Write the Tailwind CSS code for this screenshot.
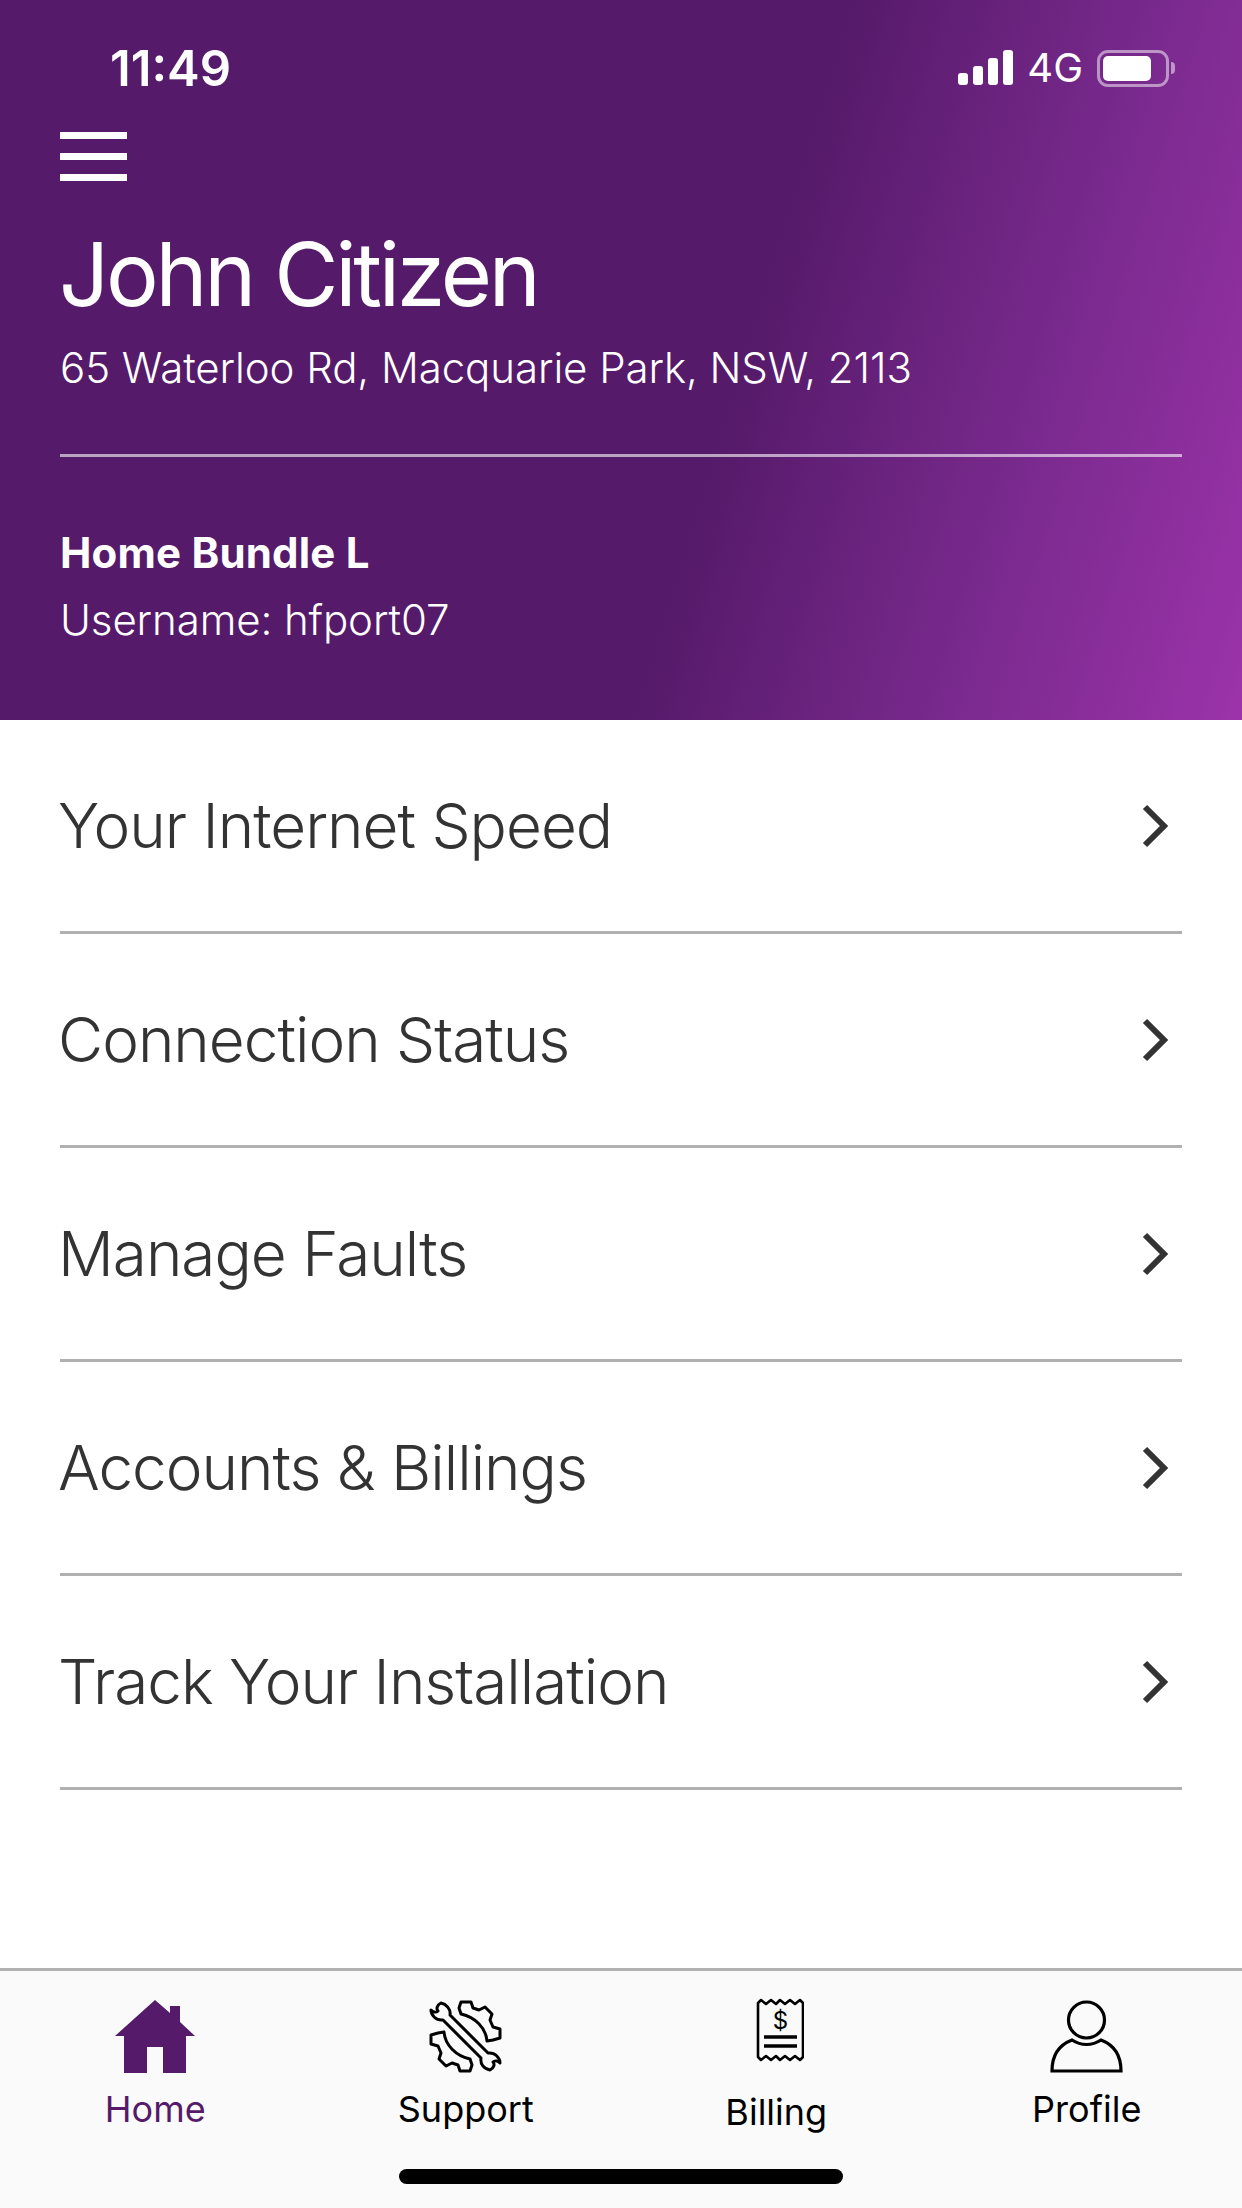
<html>
  <head>
    <title>Home</title>
    <script src="https://cdn.jsdelivr.net/npm/@tailwindcss/browser@4"></script>
  </head>

  <body>
    <div class="flex flex-col h-[2208px] w-[1242px] overflow-hidden bg-white" style='font-family: Inter, "Liberation Sans", sans-serif;'>

      <!-- Purple header -->
      <header class="h-[720px] px-[60px] text-white bg-[linear-gradient(107deg,#551a69_0%,#551a69_58%,#7a2a8e_80%,#9c33aa_100%)]">
        <!-- Status bar -->
        <div class="flex items-center justify-between h-[134px] pl-[50px] pr-[7px] pt-[2px]">
          <span class="text-[49px] font-semibold leading-none">11:49</span>
          <div class="flex items-center">
            <svg width="55" height="36" viewBox="0 0 55 36" fill="#fff">
              <rect x="0" y="23" width="10" height="12" rx="3" />
              <rect x="15" y="16" width="10" height="19" rx="3" />
              <rect x="30" y="8" width="10" height="27" rx="3" />
              <rect x="45" y="0" width="10" height="35" rx="3" />
            </svg>
            <span class="ml-[14px] text-[40px] leading-none">4G</span>
            <div class="ml-[14px] flex items-center">
              <div class="w-[72px] h-[37px] rounded-[11px] border-[3px] border-white/50 p-[3px] pr-[15px]">
                <div class="h-full rounded-[5px] bg-white"></div>
              </div>
              <div class="ml-[2px] w-[4px] h-[12px] rounded-r-full bg-white/50"></div>
            </div>
          </div>
        </div>

        <!-- Menu button -->
        <div class="flex flex-col gap-[14px] w-[67px] mt-[-2px]">
          <div class="h-[7px] bg-white"></div>
          <div class="h-[7px] bg-white"></div>
          <div class="h-[7px] bg-white"></div>
        </div>

        <h1 class="mt-[38px] -ml-[1px] text-[88px] leading-[110px] tracking-[-3.3px]">John Citizen</h1>
        <p class="mt-[14px] text-[42px] leading-[50px] font-light tracking-[-0.07px]">65 Waterloo Rd, Macquarie Park, NSW, 2113</p>

        <div class="mt-[61px] h-[3px] bg-white/60"></div>

        <p class="mt-[71px] text-[42px] leading-[50px] font-bold tracking-[0.2px]">Home Bundle L</p>
        <p class="mt-[17px] text-[42px] leading-[50px] font-light tracking-[-0.1px]">Username: hfport07</p>
      </header>

      <!-- Menu list -->
      <ul class="px-[60px] text-[#333333] text-[62px] font-light tracking-[-1px]">
        <li class="flex items-center justify-between h-[214px] border-b-[3px] border-[#b0b0b0]">
          <span class="-ml-[2px]">Your Internet Speed</span>
          <svg class="mr-[13px]" width="28" height="44" viewBox="0 0 28 44" fill="none" stroke="#333333" stroke-width="6"><path d="M4 3 L23 22 L4 41" /></svg>
        </li>
        <li class="flex items-center justify-between h-[214px] border-b-[3px] border-[#b0b0b0]">
          <span class="-ml-[2px]">Connection Status</span>
          <svg class="mr-[13px]" width="28" height="44" viewBox="0 0 28 44" fill="none" stroke="#333333" stroke-width="6"><path d="M4 3 L23 22 L4 41" /></svg>
        </li>
        <li class="flex items-center justify-between h-[214px] border-b-[3px] border-[#b0b0b0]">
          <span class="-ml-[2px]">Manage Faults</span>
          <svg class="mr-[13px]" width="28" height="44" viewBox="0 0 28 44" fill="none" stroke="#333333" stroke-width="6"><path d="M4 3 L23 22 L4 41" /></svg>
        </li>
        <li class="flex items-center justify-between h-[214px] border-b-[3px] border-[#b0b0b0]">
          <span class="-ml-[2px]">Accounts &amp; Billings</span>
          <svg class="mr-[13px]" width="28" height="44" viewBox="0 0 28 44" fill="none" stroke="#333333" stroke-width="6"><path d="M4 3 L23 22 L4 41" /></svg>
        </li>
        <li class="flex items-center justify-between h-[214px] border-b-[3px] border-[#b0b0b0]">
          <span class="-ml-[2px]">Track Your Installation</span>
          <svg class="mr-[13px]" width="28" height="44" viewBox="0 0 28 44" fill="none" stroke="#333333" stroke-width="6"><path d="M4 3 L23 22 L4 41" /></svg>
        </li>
      </ul>

      <!-- Tab bar -->
      <nav class="relative mt-auto h-[240px] border-t-[3px] border-[#b0b0b0] bg-[#fafafa] grid grid-cols-4 text-[36px] leading-[44px] text-black">
        <div class="flex flex-col items-center pt-[29px] text-[#551a69]">
          <svg width="80" height="73" viewBox="0 0 80 73" fill="#551a69"><path d="M40 0 L55 13 L55 6 L65 6 L65 22 L80 36 L71 36 L71 73 L48 73 L48 47 L32 47 L32 73 L9 73 L9 36 L0 36 Z" /></svg>
          <span class="mt-[14px]">Home</span>
        </div>
        <div class="flex flex-col items-center pt-[29px]">
          <svg width="73" height="73" viewBox="0 0 73 73" fill="none" stroke="#000" stroke-width="3" stroke-linejoin="round">
            <path d="M30 8 L32 2 L42 2 L44 8 L50 10 L56 7 L63 14 L61 20 L64 27 L71 29 L71 38 L64 40 L58 41 C57 28 46 17 32 14 Z" />
            <path d="M43 65 L41 71 L31 71 L29 65 L23 63 L17 66 L10 59 L12 53 L9 46 L2 44 L2 35 L9 33 L15 32 C16 45 27 56 41 59 Z" />
            <path d="M12 3 C8 5 7 9 9 11 C7 13 4 12 2 10 C2 15 7 21 14 20 L52 58 C51 64 55 69 61 70 C65 68 66 64 64 62 C66 60 69 61 71 63 C71 58 66 52 59 53 L21 15 C22 9 17 4 12 3 Z" />
          </svg>
          <span class="mt-[14px]">Support</span>
        </div>
        <div class="flex flex-col items-center pt-[27px]">
          <svg class="ml-[7px]" width="48" height="64" viewBox="0 0 48 64" fill="none" stroke="#000" stroke-width="2.6" stroke-linejoin="round">
            <path d="M2 5 L5 2 L10 6 L15 2 L20 6 L24 2 L29 6 L34 2 L39 6 L44 2 L47 5 L47 59 L44 62 L39 58 L34 62 L29 58 L24 62 L20 58 L15 62 L10 58 L5 62 L2 59 Z" />
            <path d="M8 39 H41 M8 48 H41" stroke-width="3.4" />
            <text x="24.5" y="31" text-anchor="middle" font-size="24" fill="#000" stroke="none" font-family="Inter, sans-serif">$</text>
          </svg>
          <span class="mt-[28px]">Billing</span>
        </div>
        <div class="flex flex-col items-center pt-[29px]">
          <svg width="73" height="73" viewBox="0 0 73 73" fill="none" stroke="#000" stroke-width="3.2">
            <circle cx="36.500" cy="20" r="18" />
            <path d="M2 71 L71 71 C71 56 64 45 51 40 C42 46 31 46 22 40 C9 45 2 56 2 71 Z" />
          </svg>
          <span class="mt-[14px]">Profile</span>
        </div>
        <div class="absolute left-[399px] top-[198px] h-[15px] w-[444px] rounded-full bg-black"></div>
      </nav>
    </div>
  </body>
</html>
